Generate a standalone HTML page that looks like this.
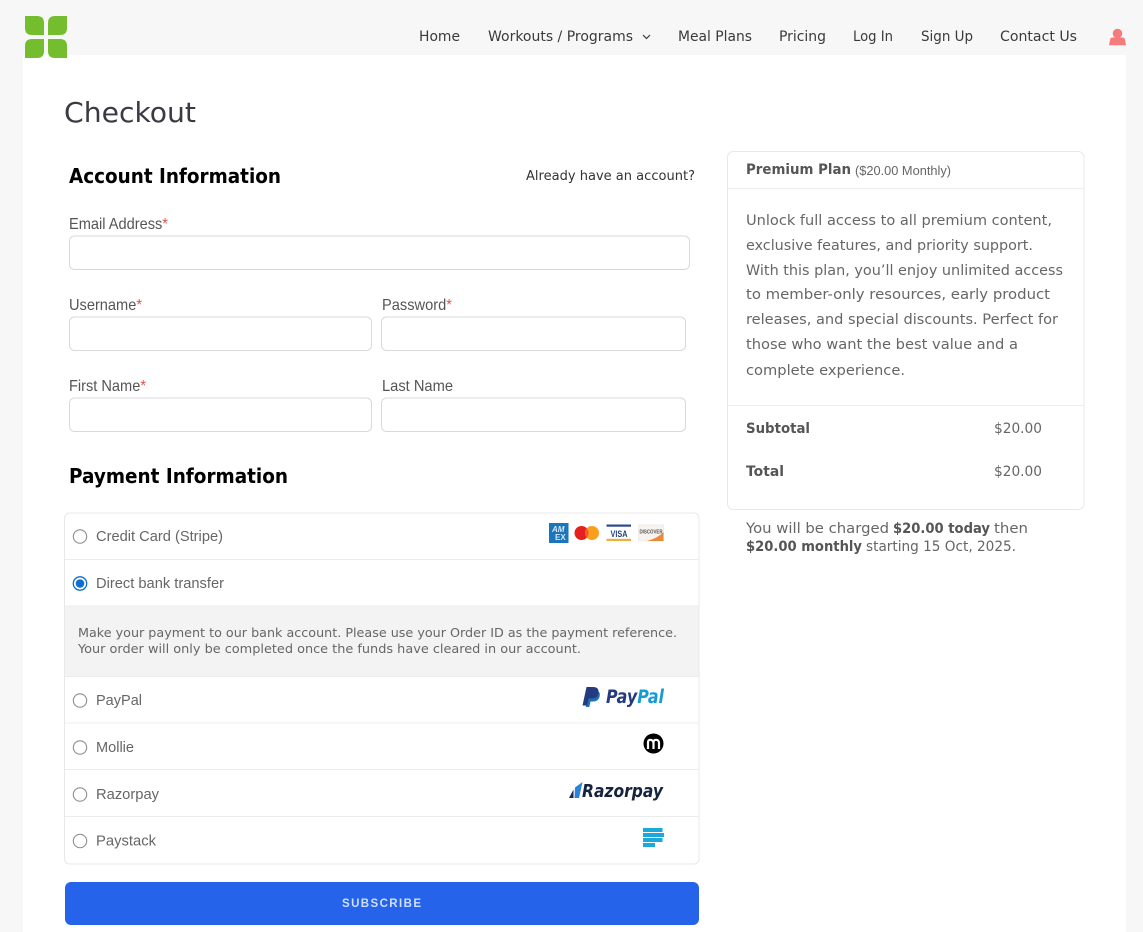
<!DOCTYPE html>
<html lang="en">
<head>
<meta charset="utf-8">
<title>Checkout</title>
<style>
html,body{margin:0;padding:0;width:1143px;height:932px;overflow:hidden;background:#f7f7f8}
svg{display:block;filter:blur(.3px)}
text{font-family:"DejaVu Sans",sans-serif;fill:#3a3a3a;white-space:pre}
.l{font-family:"Liberation Sans",sans-serif}
.n{font-size:14px;fill:#3a3a3a}
.h{font-size:20px;font-weight:bold;fill:#000}
.lab{font-family:"Liberation Sans",sans-serif;font-size:16px;fill:#555}
.star{fill:#d9534f}
.r{font-family:"Liberation Sans",sans-serif;font-size:15px;fill:#666}
.p{font-size:14.5px;fill:#666}
.b{font-size:14.5px;font-weight:bold;fill:#555}
.m{font-size:12.5px;fill:#666}
.inp{fill:#fff;stroke:#d9d9d9;stroke-width:1}
.sep{stroke:#ececec;stroke-width:1}
.rad{fill:#fff;stroke:#8f8f8f;stroke-width:1.1}
</style>
</head>
<body>
<svg width="1143" height="932" viewBox="0 0 1143 932" xmlns="http://www.w3.org/2000/svg">
<rect width="1143" height="932" fill="#f7f7f8"/>
<rect x="23" y="55" width="1103" height="877" fill="#fff"/>

<!-- logo -->
<g fill="#74bd2e">
<path d="M25 16H37Q44 16 44 23V35H32Q25 35 25 28Z"/>
<path d="M67 16V28Q67 35 60 35H48V23Q48 16 55 16Z"/>
<path d="M25 58V46Q25 39 32 39H44V51Q44 58 37 58Z"/>
<path d="M67 58H55Q48 58 48 51V39H60Q67 39 67 46Z"/>
</g>

<!-- nav -->
<text class="n" x="419" y="41" textLength="41" lengthAdjust="spacingAndGlyphs">Home</text>
<text class="n" x="488" y="41" textLength="145" lengthAdjust="spacingAndGlyphs">Workouts / Programs</text>
<path d="M643 35l3.500 3.500 3.500-3.500" fill="none" stroke="#3a3a3a" stroke-width="1.200"/>
<text class="n" x="678" y="41" textLength="74" lengthAdjust="spacingAndGlyphs">Meal Plans</text>
<text class="n" x="779" y="41" textLength="47" lengthAdjust="spacingAndGlyphs">Pricing</text>
<text class="n" x="853" y="41" textLength="40" lengthAdjust="spacingAndGlyphs">Log In</text>
<text class="n" x="921" y="41" textLength="52" lengthAdjust="spacingAndGlyphs">Sign Up</text>
<text class="n" x="1000" y="41" textLength="77" lengthAdjust="spacingAndGlyphs">Contact Us</text>
<g fill="#f47c7c">
<circle cx="1117.500" cy="33.500" r="4.800"/>
<path d="M1112 37.500H1123Q1124.500 37.500 1125 40L1126 45.200H1109L1110 40Q1110.500 37.500 1112 37.500Z"/>
</g>

<!-- heading -->
<text x="64" y="122" font-size="28" style="fill:#3a3a44" textLength="132" lengthAdjust="spacingAndGlyphs">Checkout</text>
<text class="h" x="69" y="183" textLength="212" lengthAdjust="spacingAndGlyphs">Account Information</text>
<text x="526" y="180" font-size="13" style="fill:#333" textLength="169" lengthAdjust="spacingAndGlyphs">Already have an account?</text>

<!-- form -->
<text class="lab" x="69" y="229" textLength="99" lengthAdjust="spacingAndGlyphs">Email Address<tspan class="star">*</tspan></text>
<rect class="inp" x="69.500" y="236" width="620" height="33.500" rx="5"/>
<text class="lab" x="69" y="310" textLength="73" lengthAdjust="spacingAndGlyphs">Username<tspan class="star">*</tspan></text>
<rect class="inp" x="69.500" y="317" width="302" height="33.500" rx="5"/>
<text class="lab" x="382" y="310" textLength="70" lengthAdjust="spacingAndGlyphs">Password<tspan class="star">*</tspan></text>
<rect class="inp" x="381.500" y="317" width="304" height="33.500" rx="5"/>
<text class="lab" x="69" y="391" textLength="77" lengthAdjust="spacingAndGlyphs">First Name<tspan class="star">*</tspan></text>
<rect class="inp" x="69.500" y="398" width="302" height="33.500" rx="5"/>
<text class="lab" x="382" y="391" textLength="71" lengthAdjust="spacingAndGlyphs">Last Name</text>
<rect class="inp" x="381.500" y="398" width="304" height="33.500" rx="5"/>

<text class="h" x="69" y="483" textLength="219" lengthAdjust="spacingAndGlyphs">Payment Information</text>

<!-- payment box -->
<rect x="65" y="606" width="634" height="70" fill="#f3f3f3"/>
<rect x="64.500" y="513" width="634.500" height="351" rx="5" fill="none" stroke="#e8e8e8" stroke-width="1"/>
<line class="sep" x1="65" x2="699" y1="559.500" y2="559.500"/>
<line class="sep" x1="65" x2="699" y1="606" y2="606"/>
<line class="sep" x1="65" x2="699" y1="676.500" y2="676.500"/>
<line class="sep" x1="65" x2="699" y1="723" y2="723"/>
<line class="sep" x1="65" x2="699" y1="769.500" y2="769.500"/>
<line class="sep" x1="65" x2="699" y1="816.500" y2="816.500"/>

<circle class="rad" cx="80" cy="536.500" r="6.700"/>
<text class="r" x="96" y="541" textLength="127" lengthAdjust="spacingAndGlyphs">Credit Card (Stripe)</text>
<circle cx="80" cy="583.500" r="6.700" fill="#fff" stroke="#0f6fd1" stroke-width="1.300"/>
<circle cx="80" cy="583.500" r="4.300" fill="#0f6fd1"/>
<text class="r" x="96" y="588" textLength="128" lengthAdjust="spacingAndGlyphs">Direct bank transfer</text>
<text class="m" x="78" y="637" textLength="599" lengthAdjust="spacingAndGlyphs">Make your payment to our bank account. Please use your Order ID as the payment reference.</text>
<text class="m" x="78" y="653" textLength="503" lengthAdjust="spacingAndGlyphs">Your order will only be completed once the funds have cleared in our account.</text>
<circle class="rad" cx="80" cy="700.500" r="6.700"/>
<text class="r" x="96" y="705" textLength="46" lengthAdjust="spacingAndGlyphs">PayPal</text>
<circle class="rad" cx="80" cy="747.500" r="6.700"/>
<text class="r" x="96" y="752" textLength="38" lengthAdjust="spacingAndGlyphs">Mollie</text>
<circle class="rad" cx="80" cy="794.500" r="6.700"/>
<text class="r" x="96" y="799" textLength="63" lengthAdjust="spacingAndGlyphs">Razorpay</text>
<circle class="rad" cx="80" cy="841" r="6.700"/>
<text class="r" x="96" y="845.500" textLength="60" lengthAdjust="spacingAndGlyphs">Paystack</text>

<!-- card icons -->
<rect x="549" y="523" width="19.500" height="20" fill="#1b75bb"/>
<text class="l" x="552" y="532" font-size="8" font-weight="bold" font-style="italic" style="fill:#d5e8f7">AM</text>
<text class="l" x="555" y="540" font-size="8" font-weight="bold" style="fill:#d5e8f7">EX</text>
<circle cx="581.500" cy="533" r="7" fill="#e6201f"/>
<circle cx="592" cy="533" r="7" fill="#f8a01e"/>
<path d="M586.800 528.300a7 7 0 0 1 0 9.400a7 7 0 0 1 0-9.400Z" fill="#f4601c"/>
<rect x="606.500" y="525" width="24.500" height="16" fill="#fff"/>
<rect x="606.500" y="524.500" width="24.500" height="2.200" fill="#2b4a8b"/>
<rect x="606.500" y="538.800" width="24.500" height="2.200" fill="#e8b23c"/>
<text class="l" x="610.500" y="536.800" font-size="9.500" font-weight="bold" style="fill:#27427f" textLength="17" lengthAdjust="spacingAndGlyphs">VISA</text>
<rect x="638.500" y="525" width="25" height="16" fill="#f7f3ee" stroke="#e4e0da" stroke-width=".5"/>
<path d="M647 541Q658 538 663.500 532V541Z" fill="#e88a3c"/>
<text class="l" x="639.500" y="533.500" font-size="5.500" font-weight="bold" style="fill:#555" textLength="23" lengthAdjust="spacingAndGlyphs">DISCOVER</text>

<!-- paypal -->
<path d="M589 690.500H595.500Q600.500 691 599.800 695.500Q599 701.500 592.800 701.500H590.500L589.300 707H585.800Z" fill="#1f6fb5"/>
<path d="M586.500 687H593Q599 687 598.500 692.500Q598 698.500 591.500 698.500H588.500L587 705.500H582.500Z" fill="#253b80"/>
<text x="606" y="703" font-size="18.500" font-weight="bold" font-style="italic" textLength="58" lengthAdjust="spacingAndGlyphs"><tspan style="fill:#253b80">Pay</tspan><tspan style="fill:#179bd7">Pal</tspan></text>

<!-- mollie -->
<circle cx="653.500" cy="743.500" r="10" fill="#000"/>
<path d="M648 749V742.500Q648 739.800 650.300 739.800T653.500 742.500V749M653.500 742.500Q653.500 739.800 656 739.800T659 742.500V749" fill="none" stroke="#fff" stroke-width="2.200"/>

<!-- razorpay -->
<path d="M569 798L573.500 789.500V798Z" fill="#1a2a4a"/>
<path d="M575 787.500L582.500 782L579 798H574.500Z" fill="#2b83d8"/>
<text x="582" y="797" font-size="18" font-weight="bold" font-style="italic" style="fill:#15233f" textLength="81" lengthAdjust="spacingAndGlyphs">Razorpay</text>

<!-- paystack -->
<g fill="#1aa9d8">
<rect x="643" y="828" width="19.500" height="4"/>
<rect x="643" y="833" width="21" height="4"/>
<rect x="643" y="838" width="19.500" height="4"/>
<rect x="643" y="843" width="12" height="4"/>
</g>

<!-- subscribe -->
<rect x="65" y="882" width="634" height="43" rx="6" fill="#2563eb"/>
<text class="l" x="342" y="907" font-size="11.500" font-weight="bold" style="fill:#cfe0ff" textLength="79">SUBSCRIBE</text>

<!-- summary -->
<rect x="727.500" y="151.500" width="356.500" height="358" rx="6" fill="#fff" stroke="#e8e8e8"/>
<line class="sep" x1="728" x2="1084" y1="188.500" y2="188.500"/>
<line class="sep" x1="728" x2="1084" y1="405.500" y2="405.500"/>
<text class="b" x="746" y="174" textLength="105" lengthAdjust="spacingAndGlyphs">Premium Plan</text>
<text class="l" x="855" y="175" font-size="12.500" style="fill:#666" textLength="96" lengthAdjust="spacingAndGlyphs">($20.00 Monthly)</text>
<text class="p" x="746" y="225" textLength="306" lengthAdjust="spacingAndGlyphs">Unlock full access to all premium content,</text>
<text class="p" x="746" y="250" textLength="287" lengthAdjust="spacingAndGlyphs">exclusive features, and priority support.</text>
<text class="p" x="746" y="275" textLength="317" lengthAdjust="spacingAndGlyphs">With this plan, you’ll enjoy unlimited access</text>
<text class="p" x="746" y="299" textLength="304" lengthAdjust="spacingAndGlyphs">to member-only resources, early product</text>
<text class="p" x="746" y="324" textLength="312" lengthAdjust="spacingAndGlyphs">releases, and special discounts. Perfect for</text>
<text class="p" x="746" y="349" textLength="272" lengthAdjust="spacingAndGlyphs">those who want the best value and a</text>
<text class="p" x="746" y="375" textLength="159" lengthAdjust="spacingAndGlyphs">complete experience.</text>
<text class="b" x="746" y="433" textLength="64" lengthAdjust="spacingAndGlyphs">Subtotal</text>
<text class="p" x="994" y="433" textLength="48" lengthAdjust="spacingAndGlyphs">$20.00</text>
<text class="b" x="746" y="476" textLength="38" lengthAdjust="spacingAndGlyphs">Total</text>
<text class="p" x="994" y="476" textLength="48" lengthAdjust="spacingAndGlyphs">$20.00</text>
<text class="p" x="746" y="533" textLength="143" lengthAdjust="spacingAndGlyphs">You will be charged</text>
<text class="b" x="893" y="533" textLength="97" lengthAdjust="spacingAndGlyphs">$20.00 today</text>
<text class="p" x="994" y="533" textLength="34" lengthAdjust="spacingAndGlyphs">then</text>
<text class="b" x="746" y="551" textLength="116" lengthAdjust="spacingAndGlyphs">$20.00 monthly</text>
<text class="p" x="866" y="551" textLength="150" lengthAdjust="spacingAndGlyphs">starting 15 Oct, 2025.</text>
</svg>
</body>
</html>
